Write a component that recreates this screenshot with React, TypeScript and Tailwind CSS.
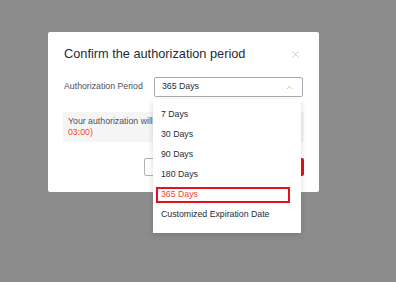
import { ChevronUp, X } from "lucide-react";

const options = ["7 Days", "30 Days", "90 Days", "180 Days", "365 Days", "Customized Expiration Date"];

export default function App() {
  const selected = "365 Days";

  return (
    <div
      className="w-[396px] h-[282px] bg-[#8c8c8c] pt-[32px] pl-[48px] overflow-hidden"
      style={{ fontFamily: '"Liberation Sans", Arial, sans-serif' }}
    >
      <div className="relative w-[271px] bg-white rounded-[2px] px-[15px] pb-[16px]">
        {/* header */}
        <div className="flex items-center justify-between pt-[14px]">
          <h2 className="ml-[1px] text-[12.75px] leading-[16px] text-[#252b3a]">
            Confirm the authorization period
          </h2>
          <X className="mr-[3px] w-[11px] h-[11px] text-[#9a9da6]" strokeWidth={1.1} />
        </div>

        {/* form row */}
        <div className="flex items-center mt-[15px]">
          <label className="ml-[1px] w-[90px] text-[8.75px] text-[#4d525e]">Authorization Period</label>
          <div className="w-[149px] h-[20px] border border-[#a8abb3] rounded-[2px] flex items-center justify-between pl-[7px] pr-[8px]">
            <span className="text-[8.75px] text-[#252b3a]">{selected}</span>
            <ChevronUp className="w-[9px] h-[9px] text-[#8a8e99]" strokeWidth={1.5} />
          </div>
        </div>

        {/* info */}
        <div className="mt-[15px] h-[30px] bg-[#f5f5f5] px-[5px] pt-[4px] text-[8.75px] leading-[10.5px] text-[#4d525e]">
          <p>Your authorization will expire on (2025-01-01 GMT+08:</p>
          <p className="text-[#f5452d]">03:00)</p>
        </div>

        {/* buttons */}
        <div className="mt-[16px] flex justify-end gap-[8px]">
          <button className="w-[72px] h-[18px] border border-[#adb0b8] rounded-[2px] bg-white text-[8.75px] text-[#252b3a]">
            Cancel
          </button>
          <button className="w-[80px] h-[18px] rounded-[2px] bg-[#e5101d] text-[8.75px] text-white">
            OK
          </button>
        </div>

        {/* dropdown menu */}
        <div className="absolute left-[105px] top-[67px] w-[148px] bg-white pt-[6px] pb-[8px] shadow-[0_2px_6px_rgba(0,0,0,0.15)]">
          {options.map((o) =>
            o === selected ? (
              <div key={o} className="h-[20px] px-[3px] py-[2px]">
                <div className="h-[16px] w-[134px] border-2 border-[#e60f1e] pl-[3px] flex items-center text-[8.75px] text-[#f5452d]">
                  {o}
                </div>
              </div>
            ) : (
              <div key={o} className="h-[20px] pl-[8px] flex items-center text-[8.75px] text-[#252b3a]">
                {o}
              </div>
            )
          )}
        </div>
      </div>
    </div>
  );
}
